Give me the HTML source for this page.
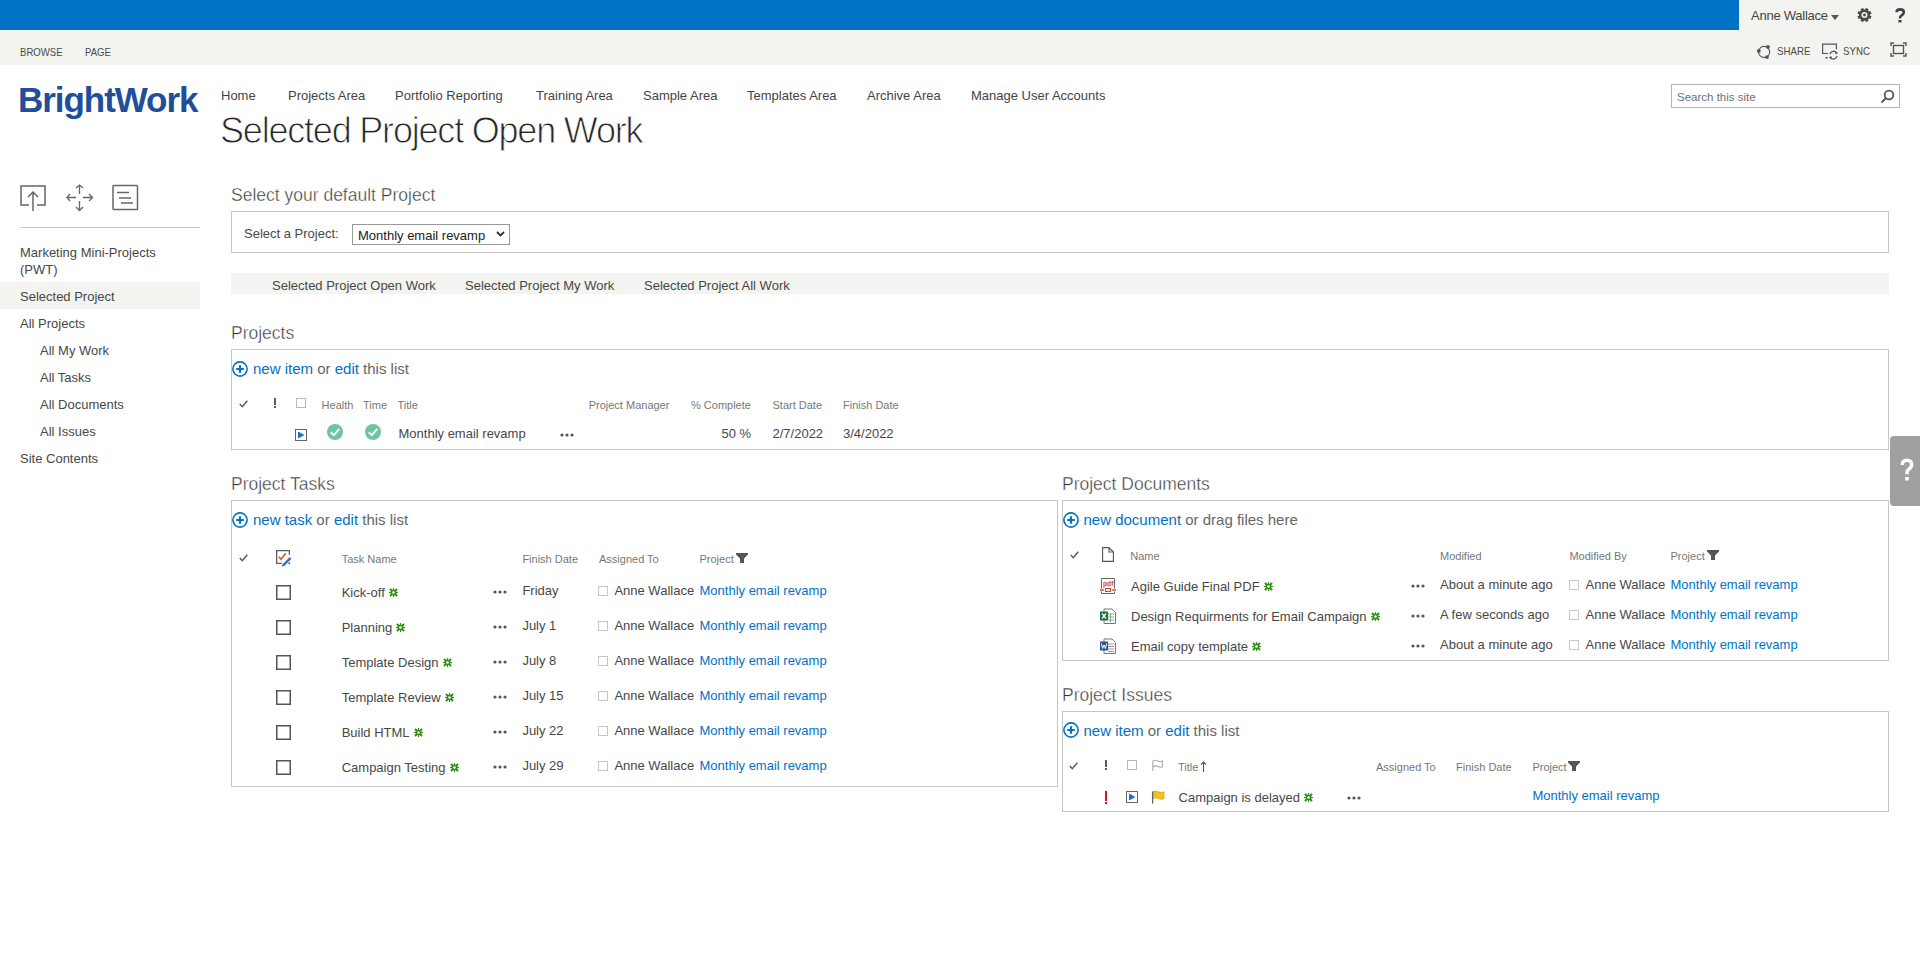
<!DOCTYPE html>
<html><head><meta charset="utf-8"><title>Selected Project Open Work</title>
<style>
html,body{margin:0;padding:0;width:1920px;height:969px;overflow:hidden;background:#fff;position:relative}
.t{position:absolute;white-space:nowrap;font-family:"Liberation Sans",sans-serif}
.ast{display:inline-block;width:9px;height:9px;margin-left:4px;vertical-align:0px}
</style></head><body>
<div style="position:absolute;left:0px;top:0px;width:1920px;height:65px;background:#f3f3ef"></div>
<div style="position:absolute;left:0px;top:0px;width:1739px;height:30px;background:#0072c6"></div>
<div class="t" style="left:1751px;top:9.00px;font-size:13px;line-height:13px;color:#444;letter-spacing:-0.25px">Anne Wallace</div>
<svg style="position:absolute;left:1831px;top:15px;" width="8" height="5" viewBox="0 0 8 5"><path d="M0 0H8L4 5Z" fill="#555"/></svg>
<svg style="position:absolute;left:1857px;top:8px;" width="15" height="15" viewBox="0 0 15 15"><g fill="#4a4a4a"><circle cx="7.5" cy="7" r="5.6"/><rect x="6" y="0" width="3" height="3" transform="rotate(22.5 7.5 7)"/><rect x="6" y="0" width="3" height="3" transform="rotate(67.5 7.5 7)"/><rect x="6" y="0" width="3" height="3" transform="rotate(112.5 7.5 7)"/><rect x="6" y="0" width="3" height="3" transform="rotate(157.5 7.5 7)"/><rect x="6" y="0" width="3" height="3" transform="rotate(202.5 7.5 7)"/><rect x="6" y="0" width="3" height="3" transform="rotate(247.5 7.5 7)"/><rect x="6" y="0" width="3" height="3" transform="rotate(292.5 7.5 7)"/><rect x="6" y="0" width="3" height="3" transform="rotate(337.5 7.5 7)"/></g><circle cx="7.5" cy="7" r="3" fill="#f3f3ef"/><circle cx="7.5" cy="7" r="1.4" fill="#4a4a4a"/></svg>
<svg style="position:absolute;left:1895px;top:8px;" width="11" height="15" viewBox="0 0 11 15"><path d="M1.6 4.2Q1.6 1.4 5.2 1.4Q8.8 1.4 8.8 4.3Q8.8 6.2 6.6 7.4Q4.9 8.4 4.9 10.6" fill="none" stroke="#444" stroke-width="2.6"/><rect x="3.4" y="12" width="3.2" height="2.4" fill="#444"/></svg>
<div class="t" style="left:19.5px;top:46.69px;font-size:11px;line-height:11px;color:#4a4a4a;transform:scaleX(0.87);transform-origin:0 0">BROWSE</div>
<div class="t" style="left:84.5px;top:46.69px;font-size:11px;line-height:11px;color:#4a4a4a;transform:scaleX(0.87);transform-origin:0 0">PAGE</div>
<svg style="position:absolute;left:1756px;top:44px;" width="16" height="16" viewBox="0 0 16 16"><circle cx="8.1" cy="8" r="5.6" fill="none" stroke="#555" stroke-width="1.1"/><g fill="#555"><circle cx="12" cy="2.9" r="1.9"/><circle cx="2.8" cy="7" r="1.9"/><circle cx="11" cy="13.1" r="1.9"/></g></svg>
<div class="t" style="left:1776.5px;top:45.69px;font-size:11px;line-height:11px;color:#4a4a4a;transform:scaleX(0.88);transform-origin:0 0">SHARE</div>
<svg style="position:absolute;left:1822px;top:43px;" width="17" height="17" viewBox="0 0 17 17"><path d="M6.2 10.5H0.6V1.2H14.4V6.2" fill="none" stroke="#555" stroke-width="1.2"/><path d="M8 11.2A3.7 3.7 0 0 1 14.6 9.8M15 13.2A3.7 3.7 0 0 1 8.4 14.6" fill="none" stroke="#555" stroke-width="1.3"/><path d="M13.2 8.3L16.2 9.9L13.6 11.6Z M9.8 16.2L6.8 14.4L9.5 12.9Z" fill="#555"/><rect x="3.6" y="14" width="2" height="1.6" fill="#555"/></svg>
<div class="t" style="left:1842.5px;top:45.69px;font-size:11px;line-height:11px;color:#4a4a4a;transform:scaleX(0.88);transform-origin:0 0">SYNC</div>
<svg style="position:absolute;left:1890px;top:42px;" width="17" height="15" viewBox="0 0 17 15"><g fill="none" stroke="#555" stroke-width="1.4"><path d="M1 4V1H4M13 1H16V4M16 11V14H13M4 14H1V11"/><rect x="3.5" y="3.5" width="10" height="8"/></g></svg>
<div class="t" style="left:18px;top:82.37px;font-size:35px;line-height:35px;color:#214e9b;font-weight:bold;letter-spacing:-1.05px">BrightWork</div>
<div class="t" style="left:221px;top:89.00px;font-size:13px;line-height:13px;color:#444;">Home</div>
<div class="t" style="left:288px;top:89.00px;font-size:13px;line-height:13px;color:#444;">Projects Area</div>
<div class="t" style="left:395px;top:89.00px;font-size:13px;line-height:13px;color:#444;">Portfolio Reporting</div>
<div class="t" style="left:536px;top:89.00px;font-size:13px;line-height:13px;color:#444;">Training Area</div>
<div class="t" style="left:643px;top:89.00px;font-size:13px;line-height:13px;color:#444;">Sample Area</div>
<div class="t" style="left:747px;top:89.00px;font-size:13px;line-height:13px;color:#444;">Templates Area</div>
<div class="t" style="left:867px;top:89.00px;font-size:13px;line-height:13px;color:#444;">Archive Area</div>
<div class="t" style="left:971px;top:89.00px;font-size:13px;line-height:13px;color:#444;">Manage User Accounts</div>
<div class="t" style="left:220px;top:112.53px;font-size:36px;line-height:36px;color:#262626;letter-spacing:-1.2px;-webkit-text-stroke:0.9px #fff">Selected Project Open Work</div>
<div style="position:absolute;left:1671px;top:84px;width:227px;height:22px;border:1px solid #b4b4b4;background:#fff"></div>
<div class="t" style="left:1677px;top:92.27px;font-size:11.5px;line-height:11.5px;color:#707070;">Search this site</div>
<svg style="position:absolute;left:1880px;top:89px;" width="15" height="15" viewBox="0 0 15 15"><g fill="none" stroke="#555" stroke-width="1.8"><circle cx="9" cy="6" r="4.3"/><path d="M6 9L1.5 13.5"/></g></svg>
<svg style="position:absolute;left:19px;top:184px;" width="28" height="28" viewBox="0 0 28 28"><g fill="none" stroke="#666" stroke-width="1.5"><path d="M10 21H2V2H26V21H18"/><path d="M14 27V8M9 13L14 8L19 13"/></g></svg>
<svg style="position:absolute;left:66px;top:184px;" width="27" height="28" viewBox="0 0 27 28"><g fill="none" stroke="#666" stroke-width="1.3"><path d="M13.5 1V10M13.5 17V26M1 13.5H10M17 13.5H26"/><path d="M10 4L13.5 1L17 4M10 23L13.5 26.5L17 23M4 10L1 13.5L4 17M23 10L26.5 13.5L23 17"/></g></svg>
<svg style="position:absolute;left:112px;top:184px;" width="27" height="28" viewBox="0 0 27 28"><g fill="none" stroke="#666" stroke-width="1.5"><rect x="1" y="1.5" width="24.5" height="24" rx="0.8"/><path d="M5 8.5H17M7 14H19M9 19H21"/></g></svg>
<div style="position:absolute;left:20px;top:227px;width:180px;height:1px;background:#c6c6c6"></div>
<div class="t" style="left:20px;top:246.00px;font-size:13px;line-height:13px;color:#474747;">Marketing Mini-Projects</div>
<div class="t" style="left:20px;top:263.00px;font-size:13px;line-height:13px;color:#474747;">(PWT)</div>
<div style="position:absolute;left:0px;top:282px;width:200px;height:27px;background:#f3f3ef"></div>
<div class="t" style="left:20px;top:290.00px;font-size:13px;line-height:13px;color:#474747;">Selected Project</div>
<div class="t" style="left:20px;top:317.00px;font-size:13px;line-height:13px;color:#474747;">All Projects</div>
<div class="t" style="left:40px;top:344.00px;font-size:13px;line-height:13px;color:#474747;">All My Work</div>
<div class="t" style="left:40px;top:371.00px;font-size:13px;line-height:13px;color:#474747;">All Tasks</div>
<div class="t" style="left:40px;top:398.00px;font-size:13px;line-height:13px;color:#474747;">All Documents</div>
<div class="t" style="left:40px;top:425.00px;font-size:13px;line-height:13px;color:#474747;">All Issues</div>
<div class="t" style="left:20px;top:452.00px;font-size:13px;line-height:13px;color:#474747;">Site Contents</div>
<div class="t" style="left:231px;top:187.19px;font-size:17.5px;line-height:17.5px;color:#333;-webkit-text-stroke:0.4px #fff">Select your default Project</div>
<div style="position:absolute;left:231px;top:211px;width:1656px;height:40px;border:1px solid #c6c6c6"></div>
<div class="t" style="left:244px;top:227.00px;font-size:13px;line-height:13px;color:#474747;">Select a Project:</div>
<div style="position:absolute;left:352px;top:224px;width:156px;height:19px;border:1px solid #999;background:#fff"></div>
<div class="t" style="left:358px;top:229.00px;font-size:13px;line-height:13px;color:#222;">Monthly email revamp</div>
<svg style="position:absolute;left:496px;top:231px;" width="9" height="6" viewBox="0 0 9 6"><path d="M1 1L4.5 4.5L8 1" fill="none" stroke="#333" stroke-width="1.8"/></svg>
<div style="position:absolute;left:231px;top:273px;width:1658px;height:21px;background:#f3f3ef"></div>
<div class="t" style="left:272px;top:279.00px;font-size:13px;line-height:13px;color:#474747;">Selected Project Open Work</div>
<div class="t" style="left:465px;top:279.00px;font-size:13px;line-height:13px;color:#474747;">Selected Project My Work</div>
<div class="t" style="left:644px;top:279.00px;font-size:13px;line-height:13px;color:#474747;">Selected Project All Work</div>
<div class="t" style="left:231px;top:325.19px;font-size:17.5px;line-height:17.5px;color:#333;-webkit-text-stroke:0.4px #fff">Projects</div>
<div style="position:absolute;left:231px;top:349px;width:1656px;height:99px;border:1px solid #c6c6c6"></div>
<svg style="position:absolute;left:232px;top:361px;" width="16" height="16" viewBox="0 0 16 16"><circle cx="8" cy="8" r="7.1" fill="none" stroke="#0072c6" stroke-width="1.6"/><path d="M8 4.2V11.8M4.2 8H11.8" stroke="#0072c6" stroke-width="2.2"/></svg>
<div class="t" style="left:253px;top:361.30px;font-size:15px;line-height:15px;color:#666;"><span style="color:#0072c6">new item</span> or <span style="color:#0072c6">edit</span> this list</div>
<svg style="position:absolute;left:239px;top:400px;" width="9" height="8" viewBox="0 0 9 8"><path d="M0.8 4L3.3 6.8L8.3 0.8" fill="none" stroke="#555" stroke-width="1.4"/></svg>
<div style="position:absolute;left:274.2px;top:398px;width:1.6px;height:6.5px;background:#5a5a5a"></div>
<div style="position:absolute;left:274.2px;top:406px;width:1.6px;height:2px;background:#5a5a5a"></div>
<div style="position:absolute;left:296px;top:398px;width:8px;height:8px;border:1px solid #b8b8b8"></div>
<div class="t" style="left:321.6px;top:399.69px;font-size:11px;line-height:11px;color:#777;">Health</div>
<div class="t" style="left:363px;top:399.69px;font-size:11px;line-height:11px;color:#777;">Time</div>
<div class="t" style="left:397.4px;top:399.69px;font-size:11px;line-height:11px;color:#777;">Title</div>
<div class="t" style="left:588.7px;top:399.69px;font-size:11px;line-height:11px;color:#777;">Project Manager</div>
<div class="t" style="left:691px;top:399.69px;font-size:11px;line-height:11px;color:#777;">% Complete</div>
<div class="t" style="left:772.5px;top:399.69px;font-size:11px;line-height:11px;color:#777;">Start Date</div>
<div class="t" style="left:843px;top:399.69px;font-size:11px;line-height:11px;color:#777;">Finish Date</div>
<svg style="position:absolute;left:295px;top:429px;" width="12" height="12" viewBox="0 0 12 12"><rect x="0.5" y="0.5" width="11" height="11" fill="#fff" stroke="#666"/><path d="M3 2.5L9.5 6L3 9.5Z" fill="#1874c9"/></svg>
<svg style="position:absolute;left:327px;top:424px;" width="16" height="16" viewBox="0 0 16 16"><circle cx="8" cy="8" r="8" fill="#70c4a0"/><path d="M3.7 8.3L6.8 11.2L12.3 4.8" fill="none" stroke="#fff" stroke-width="1.9"/></svg>
<svg style="position:absolute;left:365px;top:424px;" width="16" height="16" viewBox="0 0 16 16"><circle cx="8" cy="8" r="8" fill="#70c4a0"/><path d="M3.7 8.3L6.8 11.2L12.3 4.8" fill="none" stroke="#fff" stroke-width="1.9"/></svg>
<div class="t" style="left:398.5px;top:427.00px;font-size:13px;line-height:13px;color:#474747;">Monthly email revamp</div>
<svg style="position:absolute;left:559.5px;top:433px;" width="14" height="4" viewBox="0 0 14 4"><g fill="#555"><circle cx="2" cy="2" r="1.6"/><circle cx="7" cy="2" r="1.6"/><circle cx="12" cy="2" r="1.6"/></g></svg>
<div class="t" style="left:721.5px;top:427.00px;font-size:13px;line-height:13px;color:#474747;">50 %</div>
<div class="t" style="left:772.5px;top:427.00px;font-size:13px;line-height:13px;color:#474747;">2/7/2022</div>
<div class="t" style="left:843px;top:427.00px;font-size:13px;line-height:13px;color:#474747;">3/4/2022</div>
<div class="t" style="left:231px;top:476.19px;font-size:17.5px;line-height:17.5px;color:#333;-webkit-text-stroke:0.4px #fff">Project Tasks</div>
<div style="position:absolute;left:231px;top:500px;width:825px;height:285px;border:1px solid #c6c6c6"></div>
<svg style="position:absolute;left:232px;top:512px;" width="16" height="16" viewBox="0 0 16 16"><circle cx="8" cy="8" r="7.1" fill="none" stroke="#0072c6" stroke-width="1.6"/><path d="M8 4.2V11.8M4.2 8H11.8" stroke="#0072c6" stroke-width="2.2"/></svg>
<div class="t" style="left:253px;top:512.30px;font-size:15px;line-height:15px;color:#666;"><span style="color:#0072c6">new task</span> or <span style="color:#0072c6">edit</span> this list</div>
<svg style="position:absolute;left:239px;top:554px;" width="9" height="8" viewBox="0 0 9 8"><path d="M0.8 4L3.3 6.8L8.3 0.8" fill="none" stroke="#555" stroke-width="1.4"/></svg>
<svg style="position:absolute;left:276px;top:550px;" width="17" height="17" viewBox="0 0 17 17"><path d="M5.8 13.35H0.65V0.65H13.35V4.8M11.8 13.35H13.35V11.8" fill="none" stroke="#5a5f60" stroke-width="1.3"/><path d="M2.8 6.6L4.9 9.2L9.8 3.2" fill="none" stroke="#e04a1e" stroke-width="1.5"/><path d="M7.2 15.3L14.6 7.9" stroke="#fff" stroke-width="4.2"/><path d="M7.2 15.3L14.6 7.9" stroke="#3d6fc2" stroke-width="2.6"/><path d="M6.2 16.2L7.4 15" stroke="#3d6fc2" stroke-width="1.6"/></svg>
<div class="t" style="left:341.7px;top:553.69px;font-size:11px;line-height:11px;color:#777;">Task Name</div>
<div class="t" style="left:522.4px;top:553.69px;font-size:11px;line-height:11px;color:#777;">Finish Date</div>
<div class="t" style="left:599px;top:553.69px;font-size:11px;line-height:11px;color:#777;">Assigned To</div>
<div class="t" style="left:699.5px;top:553.69px;font-size:11px;line-height:11px;color:#777;">Project</div>
<svg style="position:absolute;left:736px;top:553px;" width="12" height="10" viewBox="0 0 12 10"><path d="M0 0H12V1.5L8 5.5V10H4V5.5L0 1.5Z" fill="#555"/></svg>
<svg style="position:absolute;left:276px;top:585px;" width="15" height="15" viewBox="0 0 15 15"><rect x="0.75" y="0.75" width="13.5" height="13.5" fill="none" stroke="#555" stroke-width="1.5"/></svg>
<div class="t" style="left:341.7px;top:586.00px;font-size:13px;line-height:13px;color:#474747;">Kick-off<svg class="ast" width="9" height="9" viewBox="0 0 9 9"><g stroke="#2e8b12" stroke-linecap="round"><path d="M4.5 0.6V8.4M0.6 4.5H8.4" stroke-width="1.3"/><path d="M1.5 1.5L7.5 7.5M7.5 1.5L1.5 7.5" stroke-width="1.9"/></g><circle cx="4.5" cy="4.5" r="2" fill="#fff" stroke="#2e8b12" stroke-width="1.3"/></svg></div>
<svg style="position:absolute;left:493px;top:590px;" width="14" height="4" viewBox="0 0 14 4"><g fill="#555"><circle cx="2" cy="2" r="1.6"/><circle cx="7" cy="2" r="1.6"/><circle cx="12" cy="2" r="1.6"/></g></svg>
<div class="t" style="left:522.4px;top:584.00px;font-size:13px;line-height:13px;color:#474747;">Friday</div>
<div style="position:absolute;left:598px;top:586px;width:8px;height:8px;border:1px solid #c8c8c8"></div>
<div class="t" style="left:614.4px;top:584.00px;font-size:13px;line-height:13px;color:#474747;">Anne Wallace</div>
<div class="t" style="left:699.5px;top:584.00px;font-size:13px;line-height:13px;color:#0072c6;">Monthly email revamp</div>
<svg style="position:absolute;left:276px;top:620px;" width="15" height="15" viewBox="0 0 15 15"><rect x="0.75" y="0.75" width="13.5" height="13.5" fill="none" stroke="#555" stroke-width="1.5"/></svg>
<div class="t" style="left:341.7px;top:621.00px;font-size:13px;line-height:13px;color:#474747;">Planning<svg class="ast" width="9" height="9" viewBox="0 0 9 9"><g stroke="#2e8b12" stroke-linecap="round"><path d="M4.5 0.6V8.4M0.6 4.5H8.4" stroke-width="1.3"/><path d="M1.5 1.5L7.5 7.5M7.5 1.5L1.5 7.5" stroke-width="1.9"/></g><circle cx="4.5" cy="4.5" r="2" fill="#fff" stroke="#2e8b12" stroke-width="1.3"/></svg></div>
<svg style="position:absolute;left:493px;top:625px;" width="14" height="4" viewBox="0 0 14 4"><g fill="#555"><circle cx="2" cy="2" r="1.6"/><circle cx="7" cy="2" r="1.6"/><circle cx="12" cy="2" r="1.6"/></g></svg>
<div class="t" style="left:522.4px;top:619.00px;font-size:13px;line-height:13px;color:#474747;">July 1</div>
<div style="position:absolute;left:598px;top:621px;width:8px;height:8px;border:1px solid #c8c8c8"></div>
<div class="t" style="left:614.4px;top:619.00px;font-size:13px;line-height:13px;color:#474747;">Anne Wallace</div>
<div class="t" style="left:699.5px;top:619.00px;font-size:13px;line-height:13px;color:#0072c6;">Monthly email revamp</div>
<svg style="position:absolute;left:276px;top:655px;" width="15" height="15" viewBox="0 0 15 15"><rect x="0.75" y="0.75" width="13.5" height="13.5" fill="none" stroke="#555" stroke-width="1.5"/></svg>
<div class="t" style="left:341.7px;top:656.00px;font-size:13px;line-height:13px;color:#474747;">Template Design<svg class="ast" width="9" height="9" viewBox="0 0 9 9"><g stroke="#2e8b12" stroke-linecap="round"><path d="M4.5 0.6V8.4M0.6 4.5H8.4" stroke-width="1.3"/><path d="M1.5 1.5L7.5 7.5M7.5 1.5L1.5 7.5" stroke-width="1.9"/></g><circle cx="4.5" cy="4.5" r="2" fill="#fff" stroke="#2e8b12" stroke-width="1.3"/></svg></div>
<svg style="position:absolute;left:493px;top:660px;" width="14" height="4" viewBox="0 0 14 4"><g fill="#555"><circle cx="2" cy="2" r="1.6"/><circle cx="7" cy="2" r="1.6"/><circle cx="12" cy="2" r="1.6"/></g></svg>
<div class="t" style="left:522.4px;top:654.00px;font-size:13px;line-height:13px;color:#474747;">July 8</div>
<div style="position:absolute;left:598px;top:656px;width:8px;height:8px;border:1px solid #c8c8c8"></div>
<div class="t" style="left:614.4px;top:654.00px;font-size:13px;line-height:13px;color:#474747;">Anne Wallace</div>
<div class="t" style="left:699.5px;top:654.00px;font-size:13px;line-height:13px;color:#0072c6;">Monthly email revamp</div>
<svg style="position:absolute;left:276px;top:690px;" width="15" height="15" viewBox="0 0 15 15"><rect x="0.75" y="0.75" width="13.5" height="13.5" fill="none" stroke="#555" stroke-width="1.5"/></svg>
<div class="t" style="left:341.7px;top:691.00px;font-size:13px;line-height:13px;color:#474747;">Template Review<svg class="ast" width="9" height="9" viewBox="0 0 9 9"><g stroke="#2e8b12" stroke-linecap="round"><path d="M4.5 0.6V8.4M0.6 4.5H8.4" stroke-width="1.3"/><path d="M1.5 1.5L7.5 7.5M7.5 1.5L1.5 7.5" stroke-width="1.9"/></g><circle cx="4.5" cy="4.5" r="2" fill="#fff" stroke="#2e8b12" stroke-width="1.3"/></svg></div>
<svg style="position:absolute;left:493px;top:695px;" width="14" height="4" viewBox="0 0 14 4"><g fill="#555"><circle cx="2" cy="2" r="1.6"/><circle cx="7" cy="2" r="1.6"/><circle cx="12" cy="2" r="1.6"/></g></svg>
<div class="t" style="left:522.4px;top:689.00px;font-size:13px;line-height:13px;color:#474747;">July 15</div>
<div style="position:absolute;left:598px;top:691px;width:8px;height:8px;border:1px solid #c8c8c8"></div>
<div class="t" style="left:614.4px;top:689.00px;font-size:13px;line-height:13px;color:#474747;">Anne Wallace</div>
<div class="t" style="left:699.5px;top:689.00px;font-size:13px;line-height:13px;color:#0072c6;">Monthly email revamp</div>
<svg style="position:absolute;left:276px;top:725px;" width="15" height="15" viewBox="0 0 15 15"><rect x="0.75" y="0.75" width="13.5" height="13.5" fill="none" stroke="#555" stroke-width="1.5"/></svg>
<div class="t" style="left:341.7px;top:726.00px;font-size:13px;line-height:13px;color:#474747;">Build HTML<svg class="ast" width="9" height="9" viewBox="0 0 9 9"><g stroke="#2e8b12" stroke-linecap="round"><path d="M4.5 0.6V8.4M0.6 4.5H8.4" stroke-width="1.3"/><path d="M1.5 1.5L7.5 7.5M7.5 1.5L1.5 7.5" stroke-width="1.9"/></g><circle cx="4.5" cy="4.5" r="2" fill="#fff" stroke="#2e8b12" stroke-width="1.3"/></svg></div>
<svg style="position:absolute;left:493px;top:730px;" width="14" height="4" viewBox="0 0 14 4"><g fill="#555"><circle cx="2" cy="2" r="1.6"/><circle cx="7" cy="2" r="1.6"/><circle cx="12" cy="2" r="1.6"/></g></svg>
<div class="t" style="left:522.4px;top:724.00px;font-size:13px;line-height:13px;color:#474747;">July 22</div>
<div style="position:absolute;left:598px;top:726px;width:8px;height:8px;border:1px solid #c8c8c8"></div>
<div class="t" style="left:614.4px;top:724.00px;font-size:13px;line-height:13px;color:#474747;">Anne Wallace</div>
<div class="t" style="left:699.5px;top:724.00px;font-size:13px;line-height:13px;color:#0072c6;">Monthly email revamp</div>
<svg style="position:absolute;left:276px;top:760px;" width="15" height="15" viewBox="0 0 15 15"><rect x="0.75" y="0.75" width="13.5" height="13.5" fill="none" stroke="#555" stroke-width="1.5"/></svg>
<div class="t" style="left:341.7px;top:761.00px;font-size:13px;line-height:13px;color:#474747;">Campaign Testing<svg class="ast" width="9" height="9" viewBox="0 0 9 9"><g stroke="#2e8b12" stroke-linecap="round"><path d="M4.5 0.6V8.4M0.6 4.5H8.4" stroke-width="1.3"/><path d="M1.5 1.5L7.5 7.5M7.5 1.5L1.5 7.5" stroke-width="1.9"/></g><circle cx="4.5" cy="4.5" r="2" fill="#fff" stroke="#2e8b12" stroke-width="1.3"/></svg></div>
<svg style="position:absolute;left:493px;top:765px;" width="14" height="4" viewBox="0 0 14 4"><g fill="#555"><circle cx="2" cy="2" r="1.6"/><circle cx="7" cy="2" r="1.6"/><circle cx="12" cy="2" r="1.6"/></g></svg>
<div class="t" style="left:522.4px;top:759.00px;font-size:13px;line-height:13px;color:#474747;">July 29</div>
<div style="position:absolute;left:598px;top:761px;width:8px;height:8px;border:1px solid #c8c8c8"></div>
<div class="t" style="left:614.4px;top:759.00px;font-size:13px;line-height:13px;color:#474747;">Anne Wallace</div>
<div class="t" style="left:699.5px;top:759.00px;font-size:13px;line-height:13px;color:#0072c6;">Monthly email revamp</div>
<div class="t" style="left:1062px;top:476.19px;font-size:17.5px;line-height:17.5px;color:#333;-webkit-text-stroke:0.4px #fff">Project Documents</div>
<div style="position:absolute;left:1062px;top:500px;width:825px;height:159px;border:1px solid #c6c6c6"></div>
<svg style="position:absolute;left:1063px;top:512px;" width="16" height="16" viewBox="0 0 16 16"><circle cx="8" cy="8" r="7.1" fill="none" stroke="#0072c6" stroke-width="1.6"/><path d="M8 4.2V11.8M4.2 8H11.8" stroke="#0072c6" stroke-width="2.2"/></svg>
<div class="t" style="left:1083.5px;top:512.30px;font-size:15px;line-height:15px;color:#666;"><span style="color:#0072c6">new document</span> or drag files here</div>
<svg style="position:absolute;left:1070px;top:551px;" width="9" height="8" viewBox="0 0 9 8"><path d="M0.8 4L3.3 6.8L8.3 0.8" fill="none" stroke="#555" stroke-width="1.4"/></svg>
<svg style="position:absolute;left:1102px;top:547px;" width="12" height="15" viewBox="0 0 12 15"><path d="M0.6 0.6H7L11.4 5V14.4H0.6Z M7 0.6V5H11.4" fill="#fff" stroke="#555" stroke-width="1.1"/></svg>
<div class="t" style="left:1130.3px;top:550.69px;font-size:11px;line-height:11px;color:#777;">Name</div>
<div class="t" style="left:1440px;top:550.69px;font-size:11px;line-height:11px;color:#777;">Modified</div>
<div class="t" style="left:1569.4px;top:550.69px;font-size:11px;line-height:11px;color:#777;">Modified By</div>
<div class="t" style="left:1670.5px;top:550.69px;font-size:11px;line-height:11px;color:#777;">Project</div>
<svg style="position:absolute;left:1707px;top:550px;" width="12" height="10" viewBox="0 0 12 10"><path d="M0 0H12V1.5L8 5.5V10H4V5.5L0 1.5Z" fill="#555"/></svg>
<svg style="position:absolute;left:1100px;top:578px;" width="16" height="16" viewBox="0 0 16 16"><path d="M1.5 10.5V0.5H14.5V10.5M1.5 13.5V15.5H14.5V13.5" fill="none" stroke="#666"/><text x="8.2" y="8" font-size="6.8" font-weight="bold" font-family="Liberation Sans" fill="#d24726" text-anchor="middle">pdf</text><path d="M0 12H3.8M12.2 12H16" stroke="#d24726" stroke-width="1.6"/><rect x="5.5" y="10.5" width="5" height="3" fill="#fff" stroke="#d24726" stroke-width="1.1"/></svg>
<div class="t" style="left:1131px;top:579.50px;font-size:13px;line-height:13px;color:#474747;">Agile Guide Final PDF<svg class="ast" width="9" height="9" viewBox="0 0 9 9"><g stroke="#2e8b12" stroke-linecap="round"><path d="M4.5 0.6V8.4M0.6 4.5H8.4" stroke-width="1.3"/><path d="M1.5 1.5L7.5 7.5M7.5 1.5L1.5 7.5" stroke-width="1.9"/></g><circle cx="4.5" cy="4.5" r="2" fill="#fff" stroke="#2e8b12" stroke-width="1.3"/></svg></div>
<svg style="position:absolute;left:1410.5px;top:584px;" width="14" height="4" viewBox="0 0 14 4"><g fill="#555"><circle cx="2" cy="2" r="1.6"/><circle cx="7" cy="2" r="1.6"/><circle cx="12" cy="2" r="1.6"/></g></svg>
<div class="t" style="left:1440px;top:578.00px;font-size:13px;line-height:13px;color:#474747;">About a minute ago</div>
<div style="position:absolute;left:1569px;top:580px;width:8px;height:8px;border:1px solid #c8c8c8"></div>
<div class="t" style="left:1585.6px;top:578.00px;font-size:13px;line-height:13px;color:#474747;">Anne Wallace</div>
<div class="t" style="left:1670.5px;top:578.00px;font-size:13px;line-height:13px;color:#0072c6;">Monthly email revamp</div>
<svg style="position:absolute;left:1100px;top:608px;" width="16" height="16" viewBox="0 0 16 16"><path d="M4 1H12L15.5 4.5V15.5H4Z" fill="#fff" stroke="#777"/><path d="M8 6H14M8 9H14M8 12H14M10.5 5V14" stroke="#6aa06a" stroke-width="0.8"/><rect x="0" y="3.5" width="8" height="9" fill="#1d7044"/><path d="M2 5.5L6 10.5M6 5.5L2 10.5" stroke="#fff" stroke-width="1.3"/></svg>
<div class="t" style="left:1131px;top:609.50px;font-size:13px;line-height:13px;color:#474747;">Design Requirments for Email Campaign<svg class="ast" width="9" height="9" viewBox="0 0 9 9"><g stroke="#2e8b12" stroke-linecap="round"><path d="M4.5 0.6V8.4M0.6 4.5H8.4" stroke-width="1.3"/><path d="M1.5 1.5L7.5 7.5M7.5 1.5L1.5 7.5" stroke-width="1.9"/></g><circle cx="4.5" cy="4.5" r="2" fill="#fff" stroke="#2e8b12" stroke-width="1.3"/></svg></div>
<svg style="position:absolute;left:1410.5px;top:614px;" width="14" height="4" viewBox="0 0 14 4"><g fill="#555"><circle cx="2" cy="2" r="1.6"/><circle cx="7" cy="2" r="1.6"/><circle cx="12" cy="2" r="1.6"/></g></svg>
<div class="t" style="left:1440px;top:608.00px;font-size:13px;line-height:13px;color:#474747;">A few seconds ago</div>
<div style="position:absolute;left:1569px;top:610px;width:8px;height:8px;border:1px solid #c8c8c8"></div>
<div class="t" style="left:1585.6px;top:608.00px;font-size:13px;line-height:13px;color:#474747;">Anne Wallace</div>
<div class="t" style="left:1670.5px;top:608.00px;font-size:13px;line-height:13px;color:#0072c6;">Monthly email revamp</div>
<svg style="position:absolute;left:1100px;top:638px;" width="16" height="16" viewBox="0 0 16 16"><path d="M4 1H12L15.5 4.5V15.5H4Z" fill="#fff" stroke="#777"/><path d="M8 6H14M8 8.5H14M8 11H14M8 13.5H14" stroke="#777" stroke-width="0.8"/><rect x="0" y="3.5" width="8" height="9" fill="#2b579a"/><path d="M1.3 5.5L2.6 10.5L4 7L5.4 10.5L6.7 5.5" fill="none" stroke="#fff" stroke-width="1"/></svg>
<div class="t" style="left:1131px;top:639.50px;font-size:13px;line-height:13px;color:#474747;">Email copy template<svg class="ast" width="9" height="9" viewBox="0 0 9 9"><g stroke="#2e8b12" stroke-linecap="round"><path d="M4.5 0.6V8.4M0.6 4.5H8.4" stroke-width="1.3"/><path d="M1.5 1.5L7.5 7.5M7.5 1.5L1.5 7.5" stroke-width="1.9"/></g><circle cx="4.5" cy="4.5" r="2" fill="#fff" stroke="#2e8b12" stroke-width="1.3"/></svg></div>
<svg style="position:absolute;left:1410.5px;top:644px;" width="14" height="4" viewBox="0 0 14 4"><g fill="#555"><circle cx="2" cy="2" r="1.6"/><circle cx="7" cy="2" r="1.6"/><circle cx="12" cy="2" r="1.6"/></g></svg>
<div class="t" style="left:1440px;top:638.00px;font-size:13px;line-height:13px;color:#474747;">About a minute ago</div>
<div style="position:absolute;left:1569px;top:640px;width:8px;height:8px;border:1px solid #c8c8c8"></div>
<div class="t" style="left:1585.6px;top:638.00px;font-size:13px;line-height:13px;color:#474747;">Anne Wallace</div>
<div class="t" style="left:1670.5px;top:638.00px;font-size:13px;line-height:13px;color:#0072c6;">Monthly email revamp</div>
<div class="t" style="left:1062px;top:687.19px;font-size:17.5px;line-height:17.5px;color:#333;-webkit-text-stroke:0.4px #fff">Project Issues</div>
<div style="position:absolute;left:1062px;top:711px;width:825px;height:99px;border:1px solid #c6c6c6"></div>
<svg style="position:absolute;left:1063px;top:722px;" width="16" height="16" viewBox="0 0 16 16"><circle cx="8" cy="8" r="7.1" fill="none" stroke="#0072c6" stroke-width="1.6"/><path d="M8 4.2V11.8M4.2 8H11.8" stroke="#0072c6" stroke-width="2.2"/></svg>
<div class="t" style="left:1083.5px;top:723.30px;font-size:15px;line-height:15px;color:#666;"><span style="color:#0072c6">new item</span> or <span style="color:#0072c6">edit</span> this list</div>
<svg style="position:absolute;left:1069px;top:762px;" width="9" height="8" viewBox="0 0 9 8"><path d="M0.8 4L3.3 6.8L8.3 0.8" fill="none" stroke="#555" stroke-width="1.4"/></svg>
<div style="position:absolute;left:1105.2px;top:760px;width:1.6px;height:6.5px;background:#5a5a5a"></div>
<div style="position:absolute;left:1105.2px;top:768px;width:1.6px;height:2px;background:#5a5a5a"></div>
<div style="position:absolute;left:1127px;top:760px;width:8px;height:8px;border:1px solid #b8b8b8"></div>
<svg style="position:absolute;left:1152px;top:759px;" width="11" height="12" viewBox="0 0 11 12"><path d="M0.8 12V2Q3.5 0.6 6 2Q8.5 3.4 10.4 2V7.6Q8.5 9 6 7.6Q3.5 6.2 0.8 7.6" fill="none" stroke="#aaa" stroke-width="1.1"/></svg>
<div class="t" style="left:1178px;top:761.69px;font-size:11px;line-height:11px;color:#777;">Title</div>
<svg style="position:absolute;left:1200px;top:761px;" width="7" height="11" viewBox="0 0 7 11"><path d="M3.5 11V1M1 3.5L3.5 1L6 3.5" fill="none" stroke="#555" stroke-width="1.1"/></svg>
<div class="t" style="left:1376px;top:761.69px;font-size:11px;line-height:11px;color:#777;">Assigned To</div>
<div class="t" style="left:1456px;top:761.69px;font-size:11px;line-height:11px;color:#777;">Finish Date</div>
<div class="t" style="left:1532.4px;top:761.69px;font-size:11px;line-height:11px;color:#777;">Project</div>
<svg style="position:absolute;left:1568px;top:761px;" width="12" height="10" viewBox="0 0 12 10"><path d="M0 0H12V1.5L8 5.5V10H4V5.5L0 1.5Z" fill="#555"/></svg>
<div style="position:absolute;left:1104.5px;top:791px;width:2.3px;height:9.5px;background:#e30d1b"></div>
<div style="position:absolute;left:1104.5px;top:802px;width:2.3px;height:2px;background:#e30d1b"></div>
<svg style="position:absolute;left:1126px;top:791px;" width="12" height="12" viewBox="0 0 12 12"><rect x="0.5" y="0.5" width="11" height="11" fill="#fff" stroke="#666"/><path d="M3 2.5L9.5 6L3 9.5Z" fill="#1874c9"/></svg>
<svg style="position:absolute;left:1151px;top:790px;" width="14" height="14" viewBox="0 0 14 14"><path d="M1.6 1.8Q4.5 0.2 7.5 1.8Q10.5 3.4 13 1.8V8.6Q10.5 10.2 7.5 8.6Q4.5 7 1.6 8.6Z" fill="#efc417" stroke="#d6a90a" stroke-width="0.8"/><path d="M1.6 1.5V13.6" stroke="#5f6566" stroke-width="1.3"/></svg>
<div class="t" style="left:1178.6px;top:791.00px;font-size:13px;line-height:13px;color:#474747;">Campaign is delayed<svg class="ast" width="9" height="9" viewBox="0 0 9 9"><g stroke="#2e8b12" stroke-linecap="round"><path d="M4.5 0.6V8.4M0.6 4.5H8.4" stroke-width="1.3"/><path d="M1.5 1.5L7.5 7.5M7.5 1.5L1.5 7.5" stroke-width="1.9"/></g><circle cx="4.5" cy="4.5" r="2" fill="#fff" stroke="#2e8b12" stroke-width="1.3"/></svg></div>
<svg style="position:absolute;left:1347px;top:796px;" width="14" height="4" viewBox="0 0 14 4"><g fill="#555"><circle cx="2" cy="2" r="1.6"/><circle cx="7" cy="2" r="1.6"/><circle cx="12" cy="2" r="1.6"/></g></svg>
<div class="t" style="left:1532.4px;top:789.00px;font-size:13px;line-height:13px;color:#0072c6;">Monthly email revamp</div>
<div style="position:absolute;left:1890px;top:436px;width:30px;height:70px;background:#a0a0a0;border-radius:4px 0 0 4px"></div>
<svg style="position:absolute;left:1900px;top:458px;" width="14" height="24" viewBox="0 0 14 24"><path d="M2.2 7Q2.2 2.2 7 2.2Q11.6 2.2 11.6 6.5Q11.6 9.4 9.1 11Q7 12.4 7 15V16.2" fill="none" stroke="#fff" stroke-width="3.4"/><rect x="5.2" y="19" width="3.7" height="3.5" fill="#fff"/></svg>
</body></html>
